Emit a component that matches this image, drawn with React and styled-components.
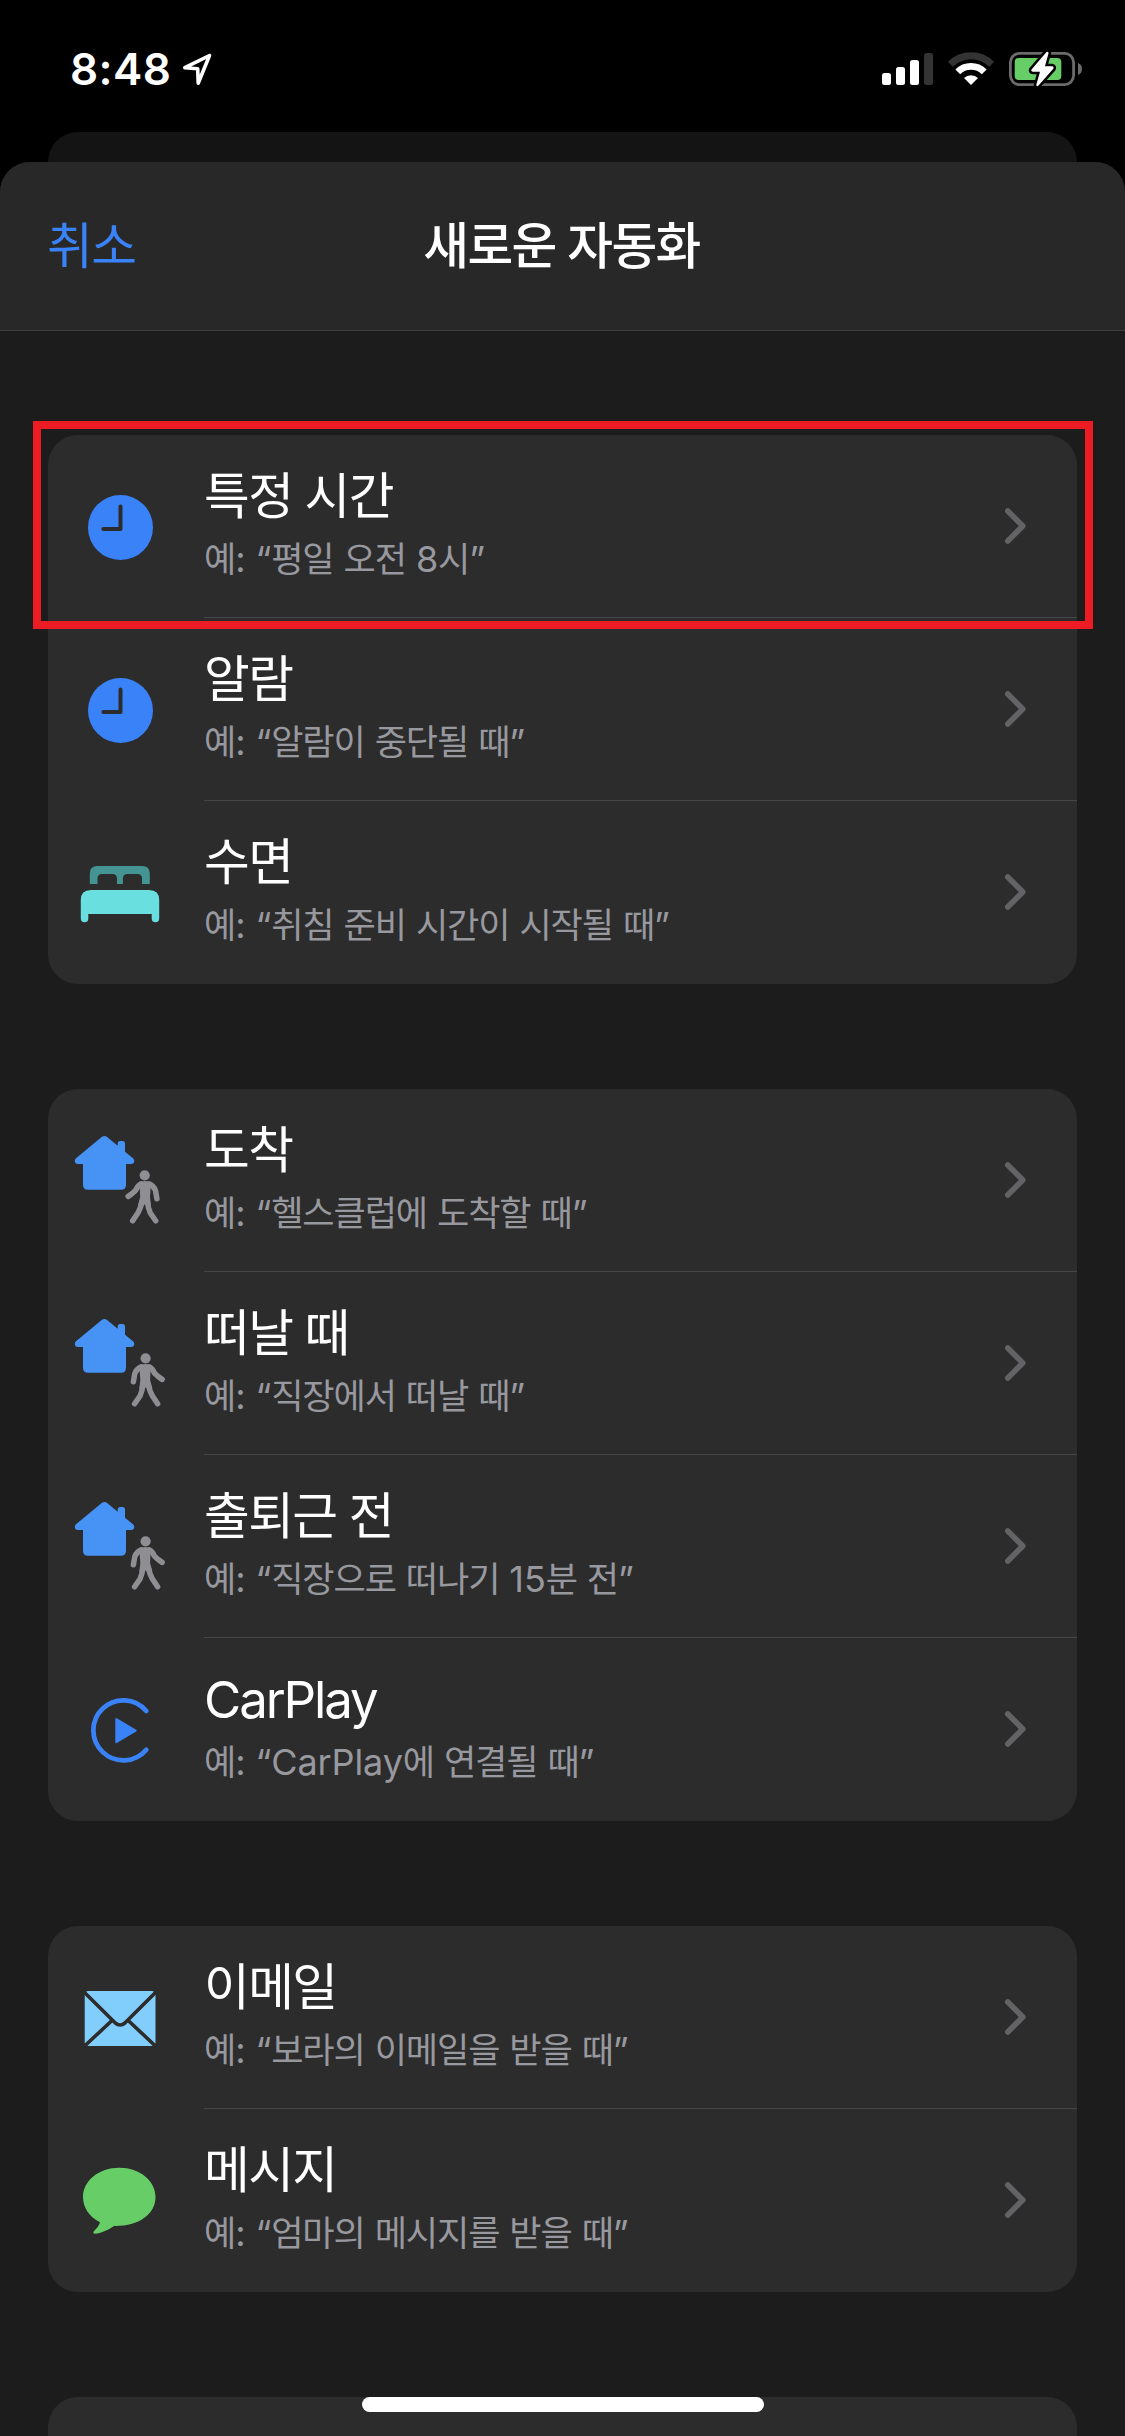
import styled, { createGlobalStyle } from "styled-components";

const GlobalStyle = createGlobalStyle`
    body{
        margin: 0;
        background: #000;
    }
    *{
        box-sizing: border-box;
    }
`;

const groups = [
    [
        { icon: "clock", title: "특정 시간", example: "예: “평일 오전 8시”", marked: true },
        { icon: "clock", title: "알람", example: "예: “알람이 중단될 때”" },
        { icon: "bed", title: "수면", example: "예: “취침 준비 시간이 시작될 때”" },
    ],
    [
        { icon: "arrive", title: "도착", example: "예: “헬스클럽에 도착할 때”" },
        { icon: "leave", title: "떠날 때", example: "예: “직장에서 떠날 때”" },
        { icon: "leave", title: "출퇴근 전", example: "예: “직장으로 떠나기 15분 전”" },
        { icon: "carplay", title: "CarPlay", example: "예: “CarPlay에 연결될 때”" },
    ],
    [
        { icon: "mail", title: "이메일", example: "예: “보라의 이메일을 받을 때”" },
        { icon: "message", title: "메시지", example: "예: “엄마의 메시지를 받을 때”" },
    ],
];

const Clock = () => (
    <>
        <circle cx="72.5" cy="92.5" r="32.5" fill="#3a82f7" />
        <path d="M55.3 94H72.5V71.5" fill="none" stroke="#2c2c2c" strokeWidth="4" strokeLinecap="round" strokeLinejoin="round" />
    </>
);

const Bed = () => (
    <>
        <path
            d="M41.8 83V72.5Q41.8 65 49.3 65H94.3Q101.8 65 101.8 72.5V83H94V77.5Q94 73 89.5 73H79.4Q74.9 73 74.9 77.5V83H69V77.5Q69 73 64.5 73H54Q49.5 73 49.5 77.5V83Z"
            fill="#459494"
        />
        <path
            d="M32.8 99Q32.8 89 42.8 89H101.2Q111.2 89 111.2 99V117.5A3.75 3.75 0 0 1 103.7 117.5V113H40.3V117.5A3.75 3.75 0 0 1 32.8 117.5Z"
            fill="#69dfdf"
        />
    </>
);

const House = () => (
    <path
        d="M54 47.8Q56.4 46 58.8 47.8L69.7 56.7V54.5Q69.7 52 72.2 52H74.5Q77 52 77 54.5V62.7L85 69.3Q86.3 70.5 86.3 72Q86.1 75 83 75H78V95.7Q78 100.7 73 100.7H40Q35 100.7 35 95.7V75H30Q27 75 26.8 72Q26.8 70.5 28 69.3Z"
        fill="#4693f5"
    />
);

const Walker = () => (
    <>
        <circle cx="96.7" cy="86.3" r="5.1" fill="#8e8e93" />
        <path d="M91.5 93.5Q94 92 97 92Q100.5 92 103 93.5L102 108L103 117H99.8L96.8 115.5L94 117L90 116L92.2 108Z" fill="#8e8e93" />
        <path
            d="M93.3 94.8Q89.8 96.5 87.6 101.3Q84.5 104.5 80.2 107.4M101 94.8Q106 97 107.5 101.5L108.9 109.7M94.2 112.5Q92.5 119 90 123.8L84.7 131.8M99.2 111.5Q100 119 102.3 124L107.7 131.8"
            fill="none"
            stroke="#8e8e93"
            strokeWidth="5.5"
            strokeLinecap="round"
            strokeLinejoin="round"
        />
    </>
);

const Arrive = () => (
    <>
        <House />
        <Walker />
    </>
);

// same figure, turned away from the house
const Leave = () => (
    <>
        <House />
        <g transform="translate(194.3 0) scale(-1 1)">
            <Walker />
        </g>
    </>
);

const CarPlay = () => (
    <>
        <path d="M98.3 73A30 30 0 1 0 98.3 111.7" fill="none" stroke="#3a82f7" strokeWidth="4.7" strokeLinecap="round" />
        <path d="M68.3 81L87.7 92.6L68.3 104.2Z" fill="#3a82f7" stroke="#3a82f7" strokeWidth="2" strokeLinejoin="round" />
    </>
);

const Mail = () => (
    <>
        <rect x="36.7" y="65" width="70.8" height="55" rx="4" fill="#81cdfb" />
        <path
            d="M35 65L67.3 97Q72.1 101 76.9 97L109 65M64.5 94L35 121.5M79.7 94L109 121.5"
            fill="none"
            stroke="#2c2c2c"
            strokeWidth="3.6"
        />
    </>
);

const Message = () => (
    <path
        d="M71.3 58.7C91.5 58.7 107.5 71.5 107.5 88C107.5 104.5 92 117.3 66 117C60 121 52.5 124.7 47 124.7Q44.5 124.3 45.8 122.2Q51 117.5 52 113.3C41 107.5 35 98.5 35 88C35 71.5 51.2 58.7 71.3 58.7Z"
        fill="#67ce67"
    />
);

const icons = {
    clock: Clock,
    bed: Bed,
    arrive: Arrive,
    leave: Leave,
    carplay: CarPlay,
    mail: Mail,
    message: Message,
};

const Signal = () => (
    <svg width="51" height="36" viewBox="0 0 51 36">
        <rect x="0" y="22" width="9" height="12" rx="2.5" fill="#fff" />
        <rect x="14" y="16" width="9" height="18" rx="2.5" fill="#fff" />
        <rect x="28" y="9" width="9" height="25" rx="2.5" fill="#fff" />
        <rect x="42" y="2" width="9" height="32" rx="2.5" fill="#333" />
    </svg>
);

const Wifi = () => (
    <svg width="46" height="36" viewBox="0 0 46 36">
        <path d="M2.3 13.3A29.3 29.3 0 0 1 43.7 13.3" fill="none" stroke="#333" strokeWidth="7" />
        <path d="M9.8 20.8A18.7 18.7 0 0 1 36.2 20.8" fill="none" stroke="#fff" strokeWidth="6.8" />
        <path d="M23 34L16 27A10 10 0 0 1 30 27Z" fill="#fff" />
    </svg>
);

const Battery = () => (
    <svg width="73" height="36" viewBox="0 0 73 36">
        <rect x="1.4" y="2.4" width="63.2" height="31.2" rx="9" fill="none" stroke="#6b6b6b" strokeWidth="2.8" />
        <path d="M69 12Q73 13.5 73 18Q73 22.5 69 24Z" fill="#6b6b6b" />
        <rect x="5.7" y="7" width="46.6" height="22" rx="4" fill="#67ce67" />
        <path
            d="M37.5 1L22.5 18.5Q21.7 20.5 24 20.8H31L27.2 34Q27.8 36 29.5 34.5L44.3 17.8Q45.3 15.5 43 15.2H36L39.6 2Q39 0 37.5 1Z"
            fill="#fff"
            stroke="#000"
            strokeWidth="5"
            paintOrder="stroke"
        />
    </svg>
);

// Hangul and Latin runs have their own size and tracking
const Mixed = ({ text }) =>
    text
        .split(/([가-힣]+)/)
        .filter(Boolean)
        .map((run, index) => (/[가-힣]/.test(run) ? <Hangul key={index}>{run}</Hangul> : run));

const Row = ({ item }) => {
    const Icon = icons[item.icon];

    return (
        <RowWrapper>
            <svg width="156" height="183" viewBox="0 0 156 183">
                <Icon />
            </svg>
            <RowBody>
                <RowText>
                    <RowTitle>
                        <Mixed text={item.title} />
                    </RowTitle>
                    <RowExample>
                        <Mixed text={item.example} />
                    </RowExample>
                </RowText>
                <svg width="24" height="38" viewBox="0 0 24 38">
                    <path d="M5.8 4L20.8 19L5.8 34" fill="none" stroke="#636366" strokeWidth="5.6" strokeLinecap="round" strokeLinejoin="round" />
                </svg>
            </RowBody>
            {item.marked && <Marker />}
        </RowWrapper>
    );
};

const App = () => {
    return (
        <Screen lang="ko">
            <GlobalStyle />
            <StatusBar>
                <Time>
                    <span>8:48</span>
                    <svg width="32" height="34" viewBox="0 0 32 34">
                        <path d="M28.5 3.5L3.8 15.7L16.7 16.7L17.2 31.2Z" fill="none" stroke="#fff" strokeWidth="3.6" strokeLinejoin="round" />
                    </svg>
                </Time>
                <Indicators>
                    <Signal />
                    <Wifi />
                    <Battery />
                </Indicators>
            </StatusBar>
            <BackSheet />
            <Sheet>
                <Header>
                    <Cancel>
                        <Mixed text="취소" />
                    </Cancel>
                    <Heading>
                        <Mixed text="새로운 자동화" />
                    </Heading>
                </Header>
                <List>
                    {groups.map((group, index) => (
                        <Group key={index}>
                            {group.map((item) => (
                                <Row key={item.title} item={item} />
                            ))}
                        </Group>
                    ))}
                    <Group />
                </List>
            </Sheet>
            <HomeIndicator />
        </Screen>
    );
};

const Screen = styled.div`
    position: relative;
    display: flex;
    flex-direction: column;
    width: 1125px;
    height: 2436px;
    overflow: hidden;
    background: #000;
    color: #fff;
    font-family: Inter, "Noto Sans CJK KR", sans-serif;
`;

const StatusBar = styled.div`
    display: flex;
    flex: none;
    justify-content: space-between;
    align-items: center;
    height: 132px;
    padding: 6px 43px 0 70px;
`;

const Time = styled.div`
    display: flex;
    align-items: center;
    gap: 10px;
    font-size: 44px;
    font-weight: 600;
    line-height: 48px;
    letter-spacing: 0.4px;
`;

const Indicators = styled.div`
    display: flex;
    gap: 15px;
`;

const BackSheet = styled.div`
    flex: none;
    height: 30px;
    margin: 0 48px;
    border-radius: 30px 30px 0 0;
    background: #141414;
`;

const Sheet = styled.main`
    flex: 1;
    min-height: 0;
    border-radius: 30px 30px 0 0;
    background: #1c1c1c;
    overflow: hidden;
`;

const Hangul = styled.span`
    font-size: 0.975em;
    letter-spacing: -0.032em;
`;

const Header = styled.header`
    display: grid;
    grid-template-columns: 1fr auto 1fr;
    align-items: center;
    height: 169px;
    padding: 0 49px 1px 47px;
    border-bottom: 1px solid #3d3d3d;
    background: #282828;
    font-size: 51px;
    line-height: 60px;
    letter-spacing: -2px;
`;

const Cancel = styled.button`
    justify-self: start;
    padding: 0;
    border: 0;
    background: none;
    color: #3a82f7;
    font: inherit;
`;

const Heading = styled.h1`
    margin: 0;
    font-size: inherit;
    font-weight: 500;
`;

const List = styled.div`
    display: flex;
    flex-direction: column;
    gap: 105px;
    padding: 104px 48px 0;
`;

const Group = styled.section`
    min-height: 183px;
    border-radius: 30px;
    background: #2c2c2c;
`;

const RowBody = styled.div`
    display: flex;
    flex: 1;
    justify-content: space-between;
    align-items: center;
    padding-right: 51px;
    border-bottom: 1px solid #464648;
`;

const RowWrapper = styled.div`
    position: relative;
    display: flex;
    height: 183px;

    &:last-child ${RowBody}{
        border-bottom-color: transparent;
    }
`;

const RowText = styled.div`
    padding-bottom: 3px;
`;

const RowTitle = styled.div`
    padding-bottom: 1px;
    font-size: 51px;
    line-height: 67px;
    letter-spacing: -2.1px;
`;

const RowExample = styled.div`
    color: #98989f;
    font-size: 36px;
    line-height: 56px;
    letter-spacing: -0.1px;
`;

const Marker = styled.div`
    position: absolute;
    top: -14px;
    left: -15px;
    z-index: 1;
    width: 1060px;
    height: 208px;
    border: 8px solid #ed1c24;
`;

const HomeIndicator = styled.div`
    position: absolute;
    bottom: 24px;
    left: 362px;
    width: 402px;
    height: 15px;
    border-radius: 8px;
    background: #fff;
`;

export default App;
